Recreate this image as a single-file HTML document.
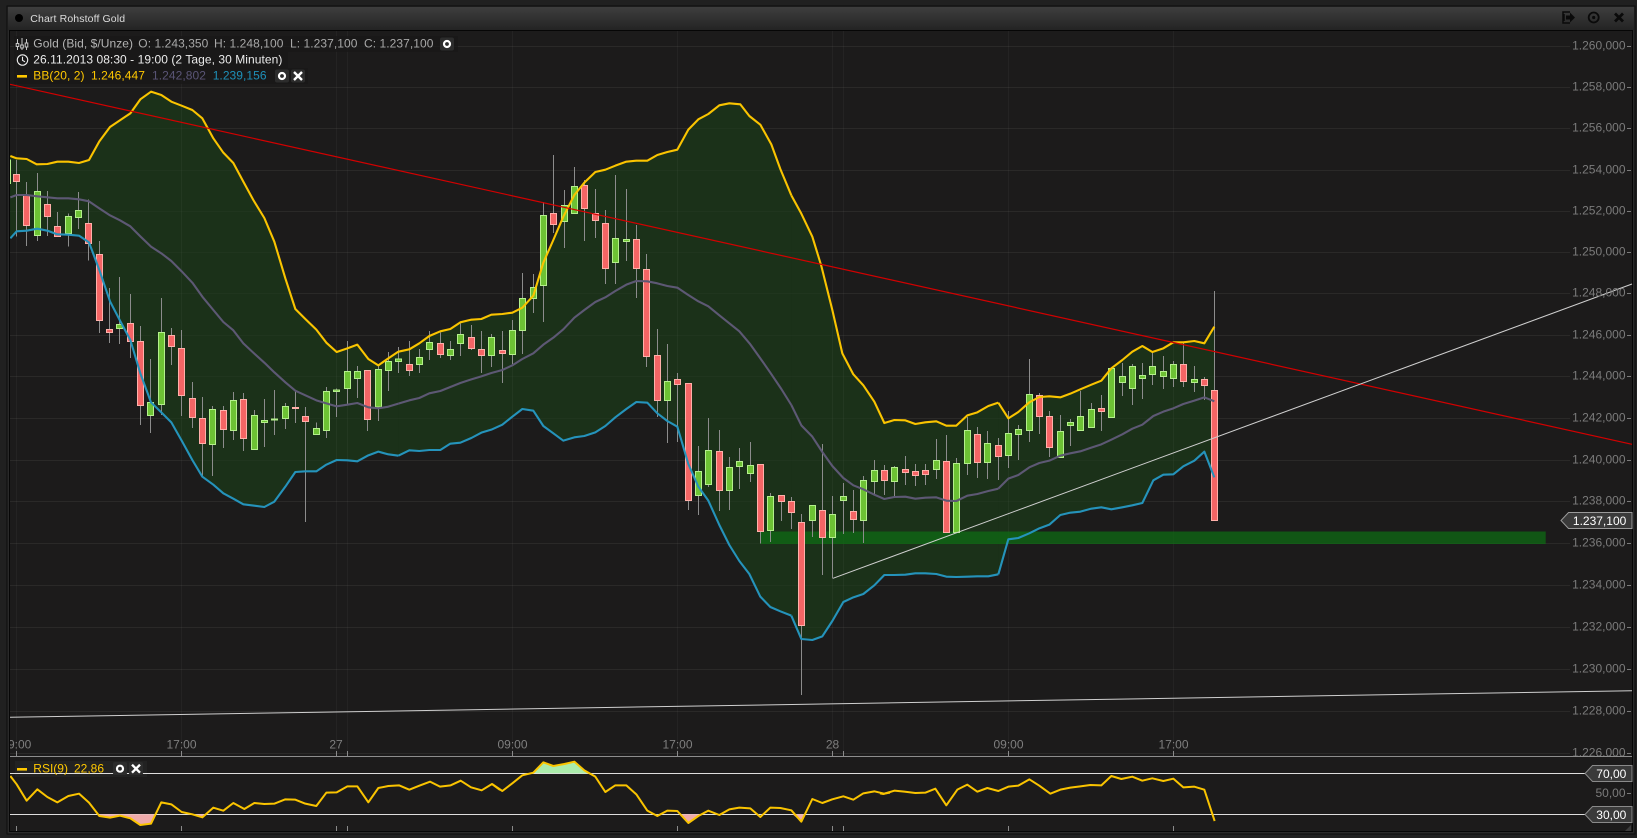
<!DOCTYPE html>
<html><head><meta charset="utf-8"><title>Chart Rohstoff Gold</title>
<style>
html,body{margin:0;padding:0;background:#1f1f1f;width:1637px;height:838px;overflow:hidden}
svg{display:block;position:absolute;left:0;top:0;font-family:"Liberation Sans",sans-serif;font-size:12px}
.w{stroke:#8c8c8c;stroke-width:3;fill:none;shape-rendering:crispEdges}
.g{fill:#6dc234;stroke:#b4f08c;stroke-width:3;shape-rendering:crispEdges}
.r{fill:#f46565;stroke:#ffb0aa;stroke-width:3;shape-rendering:crispEdges}
.f{fill:#1b3119;stroke:#1b3119;stroke-width:1.5}
.u,.m,.l,.y{fill:none;stroke-linejoin:round;stroke-linecap:butt}
.u{stroke:#fac400;stroke-width:6.3}
.m{stroke:#5d5874;stroke-width:6.3}
.l{stroke:#2593bb;stroke-width:6.3}
.y{stroke:#fac400;stroke-width:6}
.ax{fill:#7b7b7b;text-anchor:end}
.tm{fill:#7f7f7f;text-anchor:middle}
.tag{fill:#fff;text-anchor:end}
.lg{letter-spacing:.06px}
</style></head><body>
<svg width="1637" height="838" viewBox="0 0 1637 838" xmlns="http://www.w3.org/2000/svg">
<defs>
<linearGradient id="tb" x1="0" y1="0" x2="0" y2="1"><stop offset="0" stop-color="#3e3e3e"/><stop offset="1" stop-color="#232323"/></linearGradient>
<clipPath id="ch"><rect x="10" y="31" width="1622.5" height="725"/></clipPath>
<clipPath id="rs"><rect x="10" y="757" width="1622.5" height="75"/></clipPath>
</defs>
<rect width="1637" height="838" fill="#202020"/>
<rect x="7" y="6" width="1628" height="828" fill="#2a2a2a" stroke="#0c0c0c" stroke-width="1"/>
<rect x="8" y="7" width="1626" height="23.5" fill="url(#tb)"/>
<rect x="9.5" y="30.5" width="1623" height="801" fill="#1c1b1b" stroke="#060606" stroke-width="1"/>
<circle cx="19" cy="18" r="4" fill="#000"/>
<text x="30.3" y="22" fill="#dcdcdc" font-size="10.5" letter-spacing=".12">Chart Rohstoff Gold</text>
<g fill="none" stroke="#0a0a0a">
<path d="M1570 12h-7v11h7M1564 14v7" stroke-width="1.5"/>
<path d="M1566 15.5h4v-3l5 5-5 5v-3h-4z" fill="#0a0a0a" stroke="none"/>
<circle cx="1593.7" cy="17.5" r="5" stroke-width="1.8"/><circle cx="1593.7" cy="17.5" r="1.6" fill="#0a0a0a" stroke="none"/>
<path d="M1615 13.5l8 8M1623 13.5l-8 8" stroke-width="2.8"/>
</g>
<g clip-path="url(#ch)">
<path d="M10 46.5H1570M10 87.5H1570M10 128.5H1570M10 170.5H1570M10 211.5H1570M10 252.5H1570M10 293.5H1570M10 335.5H1570M10 376.5H1570M10 418.5H1570M10 460.5H1570M10 501.5H1570M10 543.5H1570M10 585.5H1570M10 627.5H1570M10 669.5H1570M10 711.5H1570M10 753.5H1570" stroke="#252423" stroke-width="1" fill="none"/>

<g transform="translate(0 140) scale(.33333)"><polygon class="f" points="31,48 50,55 80,57 110,73 142,72 172,65 205,65 237,69 267,60 298,4 330,-39 391,-80 421,-122 453,-145 484,-135 514,-115 545,-103 577,-90 607,-65 640,-5 670,38 700,69 730,125 760,180 793,234 823,305 856,415 886,507 916,537 949,569 979,608 1010,636 1042,625 1072,614 1105,657 1135,676 1165,655 1195,635 1195,947 1165,943 1135,935 1105,946 1072,964 1042,961 1010,960 979,974 949,994 916,994 886,996 856,1040 823,1085 793,1101 763,1097 730,1093 700,1076 670,1060 640,1034 607,1010 577,960 545,902 514,847 484,817 453,787 421,700 391,600 360,542 330,484 298,390 267,307 237,287 205,284 172,283 142,272 112,266 80,272 50,274 31,295"/></g>
<g transform="translate(400 140) scale(.33333)"><polygon class="f" points="-5,635 28,628 58,610 88,588 121,574 151,567 181,547 214,539 244,537 274,524 307,522 337,518 367,503 400,467 430,368 460,300 490,230 523,165 553,128 586,96 616,89 646,77 679,65 709,62 742,62 772,45 802,36 832,29 865,-31 895,-62 925,-78 958,-104 988,-110 1021,-107 1048,-72 1081,-46 1114,13 1141,87 1174,166 1174,1427 1141,1414 1111,1401 1081,1370 1048,1302 1018,1263 988,1215 958,1155 925,1082 895,1040 865,972 832,860 802,843 772,820 742,788 709,786 679,807 646,832 616,858 586,877 553,888 523,892 490,902 460,880 430,858 400,812 367,807 337,830 307,854 274,869 244,878 214,894 181,908 151,911 121,930 88,930 58,933 28,931 -5,947"/></g>
<g transform="translate(680 340) scale(.33333)"><polygon class="f" points="334,-434 364,-379 397,-310 424,-222 457,-90 487,40 520,103 550,136 583,185 613,249 643,240 676,241 706,252 736,247 769,244 799,257 829,257 862,226 892,217 925,198 955,188 955,703 925,709 892,709 862,710 829,711 799,710 769,702 736,700 706,700 676,704 643,705 613,705 583,736 550,762 520,772 490,786 457,843 427,889 397,900 364,897 334,827"/></g>
<g transform="translate(940 280) scale(.33333)"><polygon class="f" points="175,368 205,415 235,396 268,367 298,351 328,349 361,352 391,341 421,328 454,314 484,302 514,265 547,240 577,215 607,198 637,216 670,205 700,187 730,187 763,183 793,190 823,140 823,592 793,515 763,542 730,559 700,583 670,584 640,601 607,669 577,676 547,682 514,688 484,682 454,686 421,695 391,698 361,705 328,734 298,745 268,760 235,774 205,778 175,883"/></g>

<path d="M10 46.5H1570M10 87.5H1570M10 128.5H1570M10 170.5H1570M10 211.5H1570M10 252.5H1570M10 293.5H1570M10 335.5H1570M10 376.5H1570M10 418.5H1570M10 460.5H1570M10 501.5H1570M10 543.5H1570M10 585.5H1570M10 627.5H1570M10 669.5H1570M10 711.5H1570M10 753.5H1570" stroke="#fff" stroke-opacity=".025" fill="none"/>
<path d="M181.5 31V751M336.5 31V751M347.5 31V751M512.5 31V751M677.5 31V751M832.5 31V751M843.5 31V751M1008.5 31V751M1173.5 31V751M16.5 31V751" stroke="#fff" stroke-opacity=".035" fill="none"/>
<rect x="760.3" y="531.5" width="785.4" height="12.5" fill="#0e6e14" fill-opacity=".72"/>

<g transform="translate(0 140) scale(.33333)">
<path class="g" d="M22 60h9v70h-9z"/>
<path class="w" d="M49 60V290M80 126V318M112 99V303M142 153V288M172 216V290M205 220V320M235 156V267M265 178V362M298 303V579M328 444V609M358 411V612M391 462V654M421 558V855M451 657V879M484 474V825M514 564V675M544 570V828M577 726V864M607 771V1008M637 798V1008M670 798V924M700 756V900M730 759V933M763 810V930M793 777V921M823 750V885M856 789V867M886 755V849M916 801V1146M949 847V885M979 741V894M1009 745V831M1042 603V795M1072 678V774M1102 690V873M1135 675V843M1165 636V753M1195 621V699"/>
<path class="g" d="M103 154h18v133h-18zM196 229h18v52h-18zM226 211h18v22h-18zM349 553h18v13h-18zM442 787h18v40h-18zM475 577h18v217h-18zM628 808h18v106h-18zM691 781h18v91h-18zM754 826h18v103h-18zM784 841h18v7h-18zM814 837h18v3h-18zM847 799h18v37h-18zM940 865h18v19h-18zM970 754h18v118h-18zM1000 750h18v5h-18zM1033 694h18v52h-18zM1063 694h18v22h-18zM1126 688h18v113h-18zM1156 664h18v28h-18zM1186 657h18v8h-18z"/>
<path class="r" d="M40 103h18v22h-18zM71 165h18v92h-18zM133 193h18v37h-18zM163 259h18v31h-18zM256 250h18v61h-18zM289 343h18v199h-18zM319 568h18v10h-18zM382 550h18v55h-18zM412 604h18v193h-18zM505 586h18v34h-18zM535 625h18v142h-18zM568 775h18v58h-18zM598 835h18v76h-18zM661 811h18v58h-18zM721 778h18v118h-18zM877 802h18v4h-18zM907 829h18v16h-18zM1093 691h18v148h-18z"/>
</g>
<g transform="translate(400 140) scale(.33333)">
<path class="w" d="M28 603V708M58 627V699M88 573V660M121 578V654M151 603V660M181 550V648M214 555V630M244 573V699M274 582V681M307 573V729M337 540V672M367 399V642M400 402V519M430 186V546M460 45V279M493 150V324M523 81V222M553 120V303M586 147V294M616 210V432M646 105V432M679 147V363M709 255V474M739 342V681M772 567V831M802 612V909M832 699V906M865 730V1110M895 918V1125M925 834V1041M958 870V1113M988 951V1110M1018 924V1047M1051 906V1026M1081 973V1211M1111 1059V1206M1144 1065V1143M1174 1071V1167"/>
<path class="g" d="M49 652h18v22h-18zM79 607h18v22h-18zM142 628h18v19h-18zM172 583h18v28h-18zM265 592h18v55h-18zM328 571h18v73h-18zM358 475h18v97h-18zM391 442h18v33h-18zM421 226h18v211h-18zM484 196h18v49h-18zM514 139h18v82h-18zM637 295h18v73h-18zM670 298h18v6h-18zM793 724h18v58h-18zM886 994h18v73h-18zM916 931h18v103h-18zM979 982h18v70h-18zM1009 964h18v16h-18zM1042 976h18v25h-18zM1102 1069h18v103h-18z"/>
<path class="r" d="M19 673h18v19h-18zM112 610h18v34h-18zM205 592h18v34h-18zM235 628h18v19h-18zM298 631h18v10h-18zM451 220h18v34h-18zM544 136h18v70h-18zM577 220h18v22h-18zM607 250h18v136h-18zM700 298h18v88h-18zM730 388h18v262h-18zM763 646h18v136h-18zM823 718h18v16h-18zM856 730h18v352h-18zM949 934h18v118h-18zM1072 973h18v202h-18zM1135 1066h18v19h-18zM1165 1084h18v34h-18z"/>
</g>
<g transform="translate(680 340) scale(.33333)">
<path class="w" d="M364 522V1065M397 497V591M427 312V705M457 468V715M490 429V582M520 450V579M550 408V609M583 360V462M613 375V465M643 378V468M676 348V435M706 372V438M736 372V435M769 297V417M799 285V578M829 354V578M862 231V405M892 261V414M922 273V417M955 294V420"/>
<path class="g" d="M388 496h18v46h-18zM448 523h18v70h-18zM481 469h18v13h-18zM541 421h18v121h-18zM574 391h18v34h-18zM634 382h18v43h-18zM760 361h18v28h-18zM820 370h18v208h-18zM853 271h18v100h-18zM913 310h18v58h-18z"/>
<path class="r" d="M355 547h18v310h-18zM418 511h18v82h-18zM511 514h18v25h-18zM604 391h18v31h-18zM667 388h18v10h-18zM697 394h18v13h-18zM727 391h18v13h-18zM790 364h18v214h-18zM883 283h18v85h-18zM946 316h18v34h-18z"/>
</g>
<g transform="translate(940 280) scale(.33333)">
<path class="w" d="M205 393V564M235 435V540M268 237V486M298 339V462M328 393V531M361 405V534M391 417V498M421 333V453M454 369V444M484 345V453M514 264V414M547 249V348M577 252V375M607 249V357M637 216V315M670 228V327M700 243V321M730 186V321M763 258V336M793 291V360M823 33V722"/>
<path class="g" d="M196 460h18v67h-18zM226 448h18v16h-18zM259 343h18v109h-18zM352 454h18v79h-18zM382 427h18v10h-18zM412 409h18v43h-18zM445 388h18v55h-18zM505 265h18v148h-18zM538 289h18v19h-18zM568 259h18v67h-18zM598 286h18v10h-18zM628 259h18v25h-18zM661 274h18v16h-18zM691 253h18v43h-18zM754 298h18v10h-18z"/>
<path class="r" d="M289 346h18v64h-18zM319 409h18v94h-18zM475 385h18v10h-18zM721 253h18v52h-18zM784 298h18v19h-18zM814 331h18v391h-18z"/>
</g>

<g transform="translate(0 140) scale(.33333)">
<polyline class="m" points="31,172 50,165 80,165 112,169 142,172 172,175 205,175 237,178 267,184 298,205 330,226 360,241 391,259 421,289 453,320 484,340 514,363 545,394 577,428 607,470 640,510 670,546 700,571 730,610 763,641 793,668 823,697 856,727 886,752 916,766 949,781 979,790 1010,799 1042,794 1072,789 1105,802 1135,805 1165,800 1195,791"/>
<polyline class="l" points="31,295 50,274 80,272 112,266 142,272 172,283 205,284 237,287 267,307 298,390 330,484 360,542 391,600 421,700 453,787 484,817 514,847 545,902 577,960 607,1010 640,1034 670,1060 700,1076 730,1093 763,1097 793,1101 823,1085 856,1040 886,996 916,994 949,994 979,974 1010,960 1042,961 1072,964 1105,946 1135,935 1165,943 1195,947"/>
<polyline class="u" points="31,48 50,55 80,57 110,73 142,72 172,65 205,65 237,69 267,60 298,4 330,-39 391,-80 421,-122 453,-145 484,-135 514,-115 545,-103 577,-90 607,-65 640,-5 670,38 700,69 730,125 760,180 793,234 823,305 856,415 886,507 916,537 949,569 979,608 1010,636 1042,625 1072,614 1105,657 1135,676 1165,655 1195,635"/>
</g>
<g transform="translate(400 140) scale(.33333)">
<polyline class="m" points="-5,791 28,781 58,774 88,760 121,753 151,741 181,729 214,718 244,709 274,699 307,690 337,676 367,657 400,640 430,614 460,593 490,568 523,533 553,510 586,486 616,472 646,453 679,434 709,423 742,424 772,430 802,438 832,443 862,463 895,484 925,499 958,526 988,550 1018,574 1051,613 1081,655 1111,698 1144,747 1174,795"/>
<polyline class="l" points="-5,947 28,931 58,933 88,930 121,930 151,911 181,908 214,894 244,878 274,869 307,854 337,830 367,807 400,812 430,858 460,880 490,902 523,892 553,888 586,877 616,858 646,832 679,807 709,786 742,788 772,820 802,843 832,860 865,972 895,1040 925,1082 958,1155 988,1215 1018,1263 1048,1302 1081,1370 1111,1401 1141,1414 1174,1427"/>
<polyline class="u" points="-5,635 28,628 58,610 88,588 121,574 151,567 181,547 214,539 244,537 274,524 307,522 337,518 367,503 400,467 430,368 460,300 490,230 523,165 553,128 586,96 616,89 646,77 679,65 709,62 742,62 772,45 802,36 832,29 865,-31 895,-62 925,-78 958,-104 988,-110 1021,-107 1048,-72 1081,-46 1114,13 1141,87 1174,166"/>
</g>
<g transform="translate(680 340) scale(.33333)">
<polyline class="m" points="334,195 364,256 397,290 427,336 457,378 490,414 520,436 550,448 583,464 613,477 643,471 676,470 706,476 736,473 769,472 799,482 829,483 862,467 892,462 925,453 955,446"/>
<polyline class="l" points="334,827 364,897 397,900 427,889 457,843 490,786 520,772 550,762 583,736 613,705 643,705 676,704 706,700 736,700 769,702 799,710 829,711 862,710 892,709 925,709 955,703"/>
<polyline class="u" points="334,-434 364,-379 397,-310 424,-222 457,-90 487,40 520,103 550,136 583,185 613,249 643,240 676,241 706,252 736,247 769,244 799,257 829,257 862,226 892,217 925,198 955,188"/>
</g>
<g transform="translate(940 280) scale(.33333)">
<polyline class="m" points="175,626 205,596 235,585 268,562 298,549 328,542 361,527 391,520 421,514 454,503 484,493 514,479 547,463 577,446 607,434 640,408 670,395 700,385 730,372 763,362 793,352 823,364"/>
<polyline class="l" points="175,883 205,778 235,774 268,760 298,745 328,734 361,705 391,698 421,695 454,686 484,682 514,688 547,682 577,676 607,669 640,601 670,584 700,583 730,559 763,542 793,515 823,592"/>
<polyline class="u" points="175,368 205,415 235,396 268,367 298,351 328,349 361,352 391,341 421,328 454,314 484,302 514,265 547,240 577,215 607,198 637,216 670,205 700,187 730,187 763,183 793,190 823,140"/>
</g>

<path d="M10 84.3L1632 444.3" stroke="#d30000" stroke-width="1.2" fill="none"/>
<path d="M833 578.3L1632 284" stroke="#cfcfcf" stroke-width="1" fill="none"/>
<path d="M10 717.3L1632 690.7" stroke="#cfcfcf" stroke-width="1" fill="none"/>

<rect x="14" y="36" width="444" height="16" fill="#181818" fill-opacity=".75"/>
<rect x="14" y="52" width="274" height="16" fill="#181818" fill-opacity=".75"/>
<rect x="14" y="68" width="294" height="16" fill="#181818" fill-opacity=".75"/>
<g fill="none" stroke="#c8c8c8" stroke-width="1">
<path d="M17.5 39v11M22 38v12M26.5 39v11"/>
<rect x="16.2" y="43.5" width="2.6" height="3" fill="#1c1b1b"/><rect x="20.7" y="45" width="2.6" height="3" fill="#1c1b1b"/><rect x="25.2" y="43" width="2.6" height="4" fill="#1c1b1b"/>
</g>
<g fill="none" stroke="#eee" stroke-width="1.1"><circle cx="22.5" cy="60" r="5.2"/><path d="M22.5 56.8V60.3L25 61.8"/></g>
<rect x="17" y="75" width="10" height="2.6" fill="#ffc800"/>
<g class="lg">
<text x="33.3" y="47.3" fill="#b4b4b4">Gold (Bid, $/Unze)</text>
<text x="138.3" y="47.3" fill="#a8a8a8">O: 1.243,350</text>
<text x="214" y="47.3" fill="#a8a8a8">H: 1.248,100</text>
<text x="290" y="47.3" fill="#a8a8a8">L: 1.237,100</text>
<text x="364" y="47.3" fill="#a8a8a8">C: 1.237,100</text>
<text x="33.3" y="63.3" fill="#ececec">26.11.2013 08:30 - 19:00 (2 Tage, 30 Minuten)</text>
<text x="33.3" y="79.3" fill="#ffc800">BB(20, 2)</text>
<text x="91" y="79.3" fill="#ffc800">1.246,447</text>
<text x="152" y="79.3" fill="#5a5576">1.242,802</text>
<text x="212.7" y="79.3" fill="#1e90b8">1.239,156</text>
</g>
<rect x="440" y="37.5" width="14" height="13" rx="2" fill="#2c2c2c"/><circle cx="447" cy="44" r="3" fill="none" stroke="#fff" stroke-width="2.2"/>
<rect x="275" y="69.5" width="14" height="13" rx="2" fill="#2c2c2c"/><circle cx="282" cy="76" r="3" fill="none" stroke="#fff" stroke-width="2.2"/>
<rect x="291" y="69.5" width="14" height="13" rx="2" fill="#2c2c2c"/><path d="M294 72l8 8M302 72l-8 8" stroke="#fff" stroke-width="2.4"/>

<g class="ax">
<text x="1625.5" y="49.5">1.260,000</text><text x="1625.5" y="90.5">1.258,000</text><text x="1625.5" y="131.5">1.256,000</text><text x="1625.5" y="173.5">1.254,000</text><text x="1625.5" y="214.5">1.252,000</text><text x="1625.5" y="255.5">1.250,000</text><text x="1625.5" y="296.5">1.248,000</text><text x="1625.5" y="338.5">1.246,000</text><text x="1625.5" y="379.5">1.244,000</text><text x="1625.5" y="421.5">1.242,000</text><text x="1625.5" y="463.5">1.240,000</text><text x="1625.5" y="504.5">1.238,000</text><text x="1625.5" y="546.5">1.236,000</text><text x="1625.5" y="588.5">1.234,000</text><text x="1625.5" y="630.5">1.232,000</text><text x="1625.5" y="672.5">1.230,000</text><text x="1625.5" y="714.5">1.228,000</text><text x="1625.5" y="756.5">1.226,000</text>
</g>
<path d="M1627 46.5h4M1627 87.5h4M1627 128.5h4M1627 170.5h4M1627 211.5h4M1627 252.5h4M1627 293.5h4M1627 335.5h4M1627 376.5h4M1627 418.5h4M1627 460.5h4M1627 501.5h4M1627 543.5h4M1627 585.5h4M1627 627.5h4M1627 669.5h4M1627 711.5h4M1627 753.5h4" stroke="#7b7b7b" fill="none"/>
<polygon points="1561,520.5 1568.5,512.5 1632,512.5 1632,528.5 1568.5,528.5" fill="#3a3a3a" stroke="#9a9a9a"/>
<text class="tag" x="1626.3" y="525">1.237,100</text>
<g class="tm">
<text x="16.3" y="748.3">09:00</text><text x="181.5" y="748.3">17:00</text><text x="336" y="748.3">27</text><text x="512.5" y="748.3">09:00</text><text x="677.5" y="748.3">17:00</text><text x="832.5" y="748.3">28</text><text x="1008.5" y="748.3">09:00</text><text x="1173.5" y="748.3">17:00</text>
</g>
<path d="M16.5 751V756M181.5 751V756M336.5 751V756M347.5 751V756M512.5 751V756M677.5 751V756M832.5 751V756M843.5 751V756M1008.5 751V756M1173.5 751V756" stroke="#8a8a8a" fill="none"/>
</g>
<rect x="10" y="756" width="1622" height="1" fill="#8d8d8d"/>

<g clip-path="url(#rs)">
<rect x="15" y="761" width="132" height="16" fill="#222"/>
<path d="M10 773.5H1632M10 814.5H1632" stroke="#dedede" fill="none"/>
<rect x="17" y="768" width="10" height="2.6" fill="#ffc800"/>
<text x="33.3" y="772.3" fill="#ffc800">RSI(9)</text><text x="74" y="772.3" fill="#ffc800">22,86</text>
<rect x="113" y="762" width="14" height="13" rx="2" fill="#2c2c2c"/><circle cx="120" cy="768.7" r="3" fill="none" stroke="#fff" stroke-width="2.2"/>
<rect x="129" y="762" width="14" height="13" rx="2" fill="#2c2c2c"/><path d="M132 764.7l8 8M140 764.7l-8 8" stroke="#fff" stroke-width="2.4"/>
<g transform="translate(0 680) scale(.33333)">
<polygon points="295,403 298,408 330,413 360,407 391,415 421,435 453,431 466,403" fill="#eeaaaa"/>
<polygon points="590,403 607,412 620,403" fill="#eeaaaa"/>
<polyline class="y" points="31,288 50,313 80,362 112,328 142,351 172,367 205,348 237,341 267,368 298,408 330,413 360,407 391,415 421,435 453,431 484,367 514,373 545,396 577,403 607,412 640,383 670,392 700,369 733,387 763,369 793,372 823,371 856,358 886,359 916,371 949,378 979,338 1010,337 1042,319 1072,319 1105,367 1135,324 1165,318 1197,316 1228,329 1258,317 1290,305 1320,320 1352,316 1382,302 1413,322 1445,331 1476,312 1500,330"/>
</g>
<g transform="translate(490 755) scale(.33333)">
<polygon points="127,54 160,22 190,33 223,27 253,20 283,46 300,55" fill="#abecab"/>
<polygon points="570,178 595,204 625,183 632,178" fill="#eeaaaa"/>
<polygon points="908,178 934,200 945,178" fill="#eeaaaa"/>
<polyline class="y" points="6,87 37,108 67,85 97,61 130,53 160,22 190,33 223,27 253,20 283,46 316,65 346,111 376,91 409,91 439,118 472,167 502,183 532,167 562,168 595,204 625,183 655,167 688,180 718,163 748,158 781,160 811,186 841,158 871,159 904,166 934,200 967,132 997,144 1027,133 1060,124 1090,134 1120,115 1153,109 1183,116 1200,113"/>
</g>
<g transform="translate(880 755) scale(.33333)">
<polyline class="y" points="0,115 10,117 43,107 73,110 106,114 136,113 166,101 199,151 232,104 262,89 292,110 322,99 355,108 385,95 415,92 448,73 478,92 511,116 541,104 571,98 601,94 631,90 664,91 694,63 724,72 757,65 787,77 817,70 850,78 880,71 910,97 943,95 973,104 1004,198"/>
</g>
<polygon points="1585,773.5 1592.5,765.5 1632,765.5 1632,781.5 1592.5,781.5" fill="#3a3a3a" stroke="#8a8a8a"/>
<text class="tag" x="1626.3" y="778">70,00</text>
<polygon points="1585,814.5 1592.5,806.5 1632,806.5 1632,822.5 1592.5,822.5" fill="#3a3a3a" stroke="#8a8a8a"/>
<text class="tag" x="1626.3" y="819">30,00</text>
<text class="ax" x="1625.5" y="797">50,00</text>
<path d="M1627 793.5h4" stroke="#7b7b7b"/>
<path d="M16.5 826V831M181.5 826V831M336.5 826V831M347.5 826V831M512.5 826V831M677.5 826V831M832.5 826V831M843.5 826V831M1008.5 826V831M1173.5 826V831" stroke="#8a8a8a" fill="none"/>
<polygon points="1631,825 1631,831 1625,831" fill="#3c3c3c"/>
</g>
</svg>
</body></html>
